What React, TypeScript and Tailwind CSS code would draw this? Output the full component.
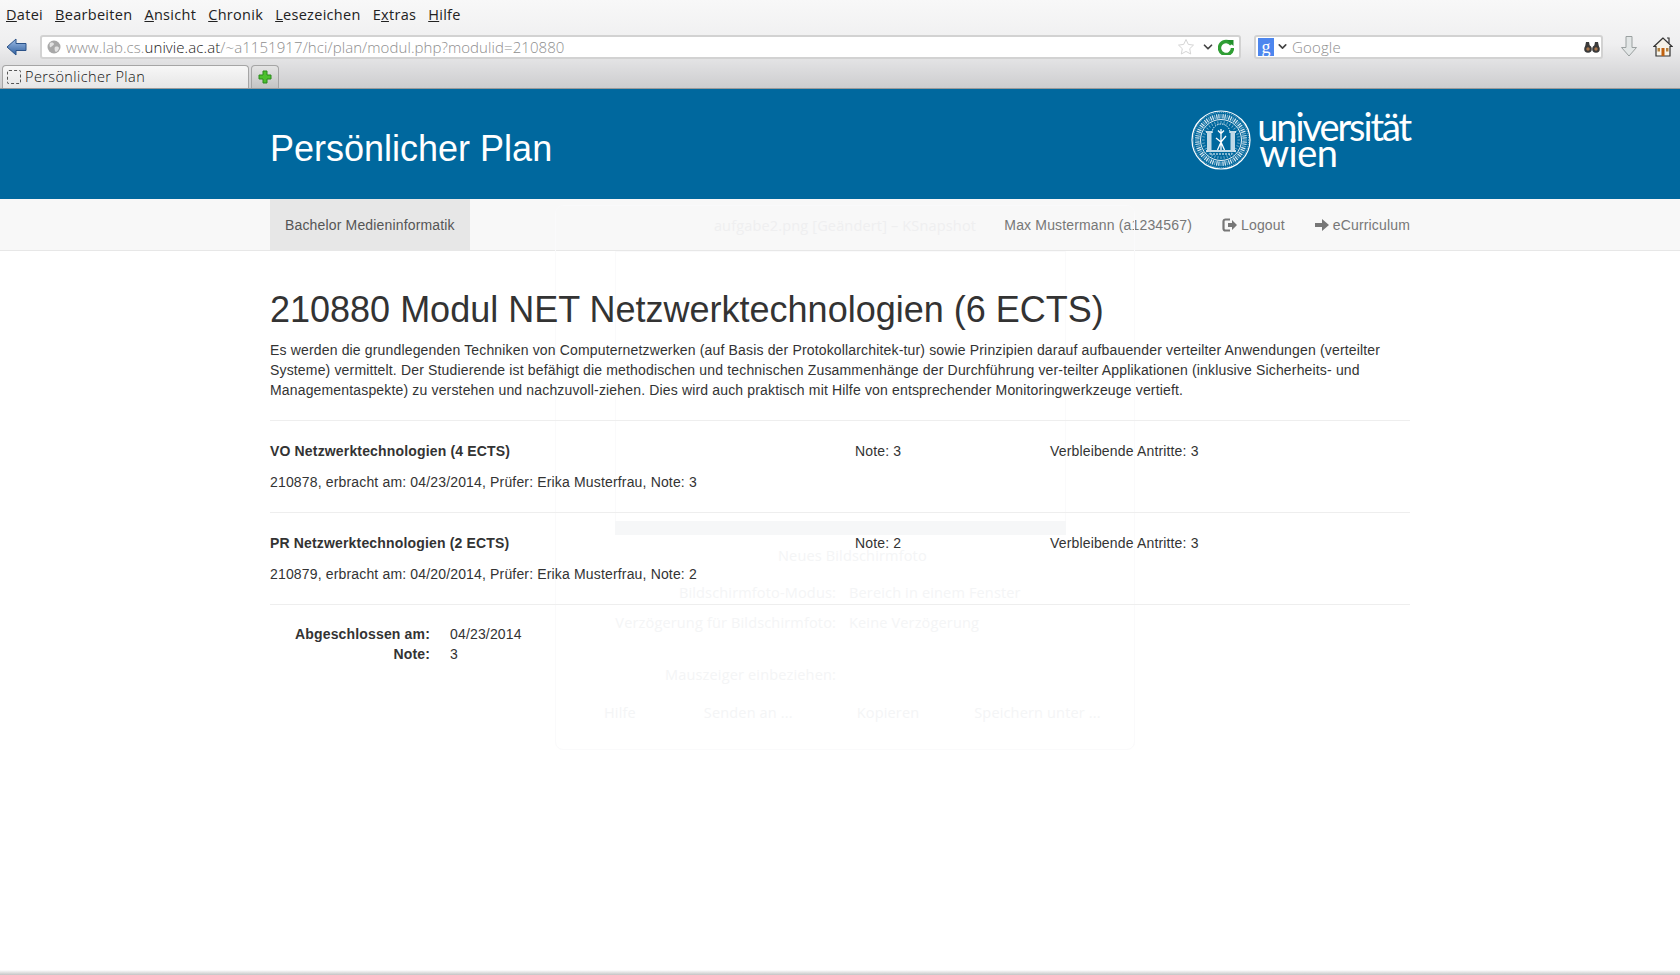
import { ChevronDown } from "lucide-react"

const menus = [
  ["D", "atei"],
  ["B", "earbeiten"],
  ["A", "nsicht"],
  ["C", "hronik"],
  ["L", "esezeichen"],
  ["E", "", "x", "tras"],
  ["H", "ilfe"],
]

function Seal() {
  const ticks = Array.from({ length: 72 }, (_, i) => i * 5)
  const inner = Array.from({ length: 36 }, (_, i) => i * 10)
  return (
    <svg width="60" height="60" viewBox="0 0 60 60" className="shrink-0">
      <circle cx="30" cy="30" r="29" fill="none" stroke="#fff" strokeWidth="1.2" />
      <circle cx="30" cy="30" r="27.600" fill="none" stroke="#fff" strokeWidth="0.5" strokeDasharray="1 1" />
      <circle cx="30" cy="30" r="20.500" fill="none" stroke="#fff" strokeWidth="0.9" />
      {ticks.map((a) => (
        <rect key={a} x="29.400" y="4" width="1.200" height="4.500" fill="#fff" opacity={a % 15 === 0 ? 0.45 : 0.85} transform={`rotate(${a} 30 30)`} />
      ))}
      {inner.map((a) => (
        <rect key={a} x="29.600" y="11" width="0.800" height="2.600" fill="#fff" opacity="0.55" transform={`rotate(${a} 30 30)`} />
      ))}
      <rect x="16" y="23" width="4.500" height="17" fill="#fff" opacity="0.75" />
      <rect x="39.500" y="23" width="4.500" height="17" fill="#fff" opacity="0.75" />
      <path d="M15 22h6.500M38.500 22h6.500M15 41h30" stroke="#fff" strokeWidth="1.300" />
      <path d="M21 23a9 9 0 0 1 18 0" fill="none" stroke="#fff" strokeWidth="1" strokeDasharray="1.500 1" />
      <path d="M30 19v21M25 28l5 4 5-6M26.500 40l3.500-8 3.500 8M27 20.500l3 3 3-3" fill="none" stroke="#fff" strokeWidth="1.300" />
      <path d="M19 44h22" stroke="#fff" strokeWidth="1" strokeDasharray="2 1" />
    </svg>
  )
}

function BrowserChrome() {
  return (
    <div className="h-[89px] bg-gradient-to-b from-[#f8f8f8] via-[#efeff0] to-[#cdcdcf] border-b border-[#9a9a9a] font-['Open_Sans',sans-serif] text-[#222]">
      <div className="flex h-[30px] items-center gap-[12px] pl-[6px] text-[14.5px] tracking-[0.3px]">
        {menus.map((m) => (
          <span key={m[0]}>
            {m[2] ? (
              <>
                {m[0]}
                <u>{m[2]}</u>
                {m[3]}
              </>
            ) : (
              <>
                <u>{m[0]}</u>
                {m[1]}
              </>
            )}
          </span>
        ))}
      </div>
      <div className="flex h-[30px] items-center pt-[3px]">
        <svg width="22" height="20" viewBox="0 0 22 20" className="ml-[6px] mr-[12px]">
          <defs>
            <linearGradient id="back" x1="0" y1="0" x2="0" y2="1">
              <stop offset="0" stopColor="#9dbce6" />
              <stop offset="1" stopColor="#2f5f9e" />
            </linearGradient>
          </defs>
          <path d="M1 10 10 2v4.500h10v7H10V18z" fill="url(#back)" stroke="#2b5288" strokeWidth="1" />
        </svg>
        <div className="flex h-[24px] w-[1201px] items-center rounded-[3px] border-2 border-[#d2d2d2] bg-white pl-[5px] text-[15px] font-light tracking-[0.08px] text-[#8e8e8e]">
          <svg width="14" height="14" viewBox="0 0 14 14" className="mr-[5px] shrink-0">
            <circle cx="7" cy="7" r="6.500" fill="#a8a8a8" />
            <path d="M3 3c2-1 4 0 4 1S5 6 4 7 2 6 3 3zM8 7c2-1 4 0 4 1s-2 4-3 4-2-4-1-5z" fill="#e2e2e2" />
          </svg>
          <span>
            www.lab.cs.<span className="text-[#222]">univie.ac.at</span>/~a1151917/hci/plan/modul.php?modulid=210880
          </span>
          <div className="ml-auto flex items-center">
            <svg width="18" height="18" viewBox="0 0 18 18" className="mr-[4px]">
              <path d="m9 1.500 2.300 4.900 5.200.7-3.800 3.600 1 5.300L9 13.400 4.300 16l1-5.300L1.500 7.100l5.200-.7z" fill="#fff" stroke="#d5d5d5" strokeWidth="1" />
            </svg>
            <ChevronDown size={14} strokeWidth={3} className="ml-[2px] text-[#444]" />
            <svg width="16" height="16" viewBox="0 0 16 16" className="ml-[3px] mr-[5px]">
              <path d="M13.500 5.500A6.500 6.500 0 1 0 14.500 9" fill="none" stroke="#2f9e34" strokeWidth="3.400" />
              <path d="M9 1h6.500v6z" fill="#1f8f2a" />
            </svg>
          </div>
        </div>
        <div className="ml-[13px] flex h-[24px] w-[349px] items-center rounded-[3px] border-2 border-[#d2d2d2] bg-white pl-[2px] text-[15px] font-light text-[#8e8e8e]">
          <span className="flex h-[18px] w-[16px] items-center justify-center bg-[#4d86ee] font-['Liberation_Serif',serif] text-[18px] leading-none text-white">
            g
          </span>
          <ChevronDown size={13} strokeWidth={3} className="ml-[2px] mr-[3px] text-[#444]" />
          <span>Google</span>
          <svg width="16" height="12" viewBox="0 0 16 12" className="ml-auto mr-[1px]">
            <circle cx="4" cy="8" r="3.800" fill="#3a3a3a" />
            <circle cx="12" cy="8" r="3.800" fill="#3a3a3a" />
            <path d="M2 1h3l1 5H1zM11 1h3l1 5h-5z" fill="#3a3a3a" />
            <circle cx="4" cy="8" r="1.700" fill="#a7744a" />
            <circle cx="12" cy="8" r="1.700" fill="#a7744a" />
          </svg>
        </div>
        <svg width="18" height="24" viewBox="0 0 18 24" className="ml-[17px]">
          <path d="M6 1.500h6v11h4.500L9 21 1.500 12.500H6z" fill="#e2e6e6" stroke="#9aa0a0" strokeWidth="1" />
        </svg>
        <svg width="20" height="21" viewBox="0 0 20 21" className="ml-[15px]">
          <path d="M14 2h2v5" fill="none" stroke="#333" strokeWidth="1.200" />
          <path d="M10 2 1 10.500h2V20h14v-9.500h2z" fill="#f7f3e8" stroke="#333" strokeWidth="1.200" />
          <rect x="8.500" y="12" width="3" height="8" fill="#c0610f" />
          <rect x="4.500" y="12" width="2.500" height="3.500" fill="#b5813c" />
          <rect x="13" y="12" width="2.500" height="3.500" fill="#b5813c" />
        </svg>
      </div>
      <div className="flex h-[28px] items-end pl-[2px]">
        <div className="flex h-[23px] w-[247px] items-center rounded-t-[4px] border border-b-0 border-[#a5a5a5] bg-gradient-to-b from-[#f7f7f7] to-[#e6e6e6] pl-[4px] text-[14.5px] font-light tracking-[0.4px] text-[#111]">
          <span className="mr-[4px] h-[14px] w-[14px] rounded-[2px] border border-dashed border-[#555]" />
          Persönlicher Plan
        </div>
        <div className="ml-[2px] flex h-[23px] w-[28px] items-center justify-center rounded-t-[4px] border border-b-0 border-[#a5a5a5] bg-gradient-to-b from-[#e4e4e4] to-[#c4c4c4]">
          <svg width="14" height="14" viewBox="0 0 14 14">
            <path d="M5 1h4v4h4v4H9v4H5V9H1V5h4z" fill="#4cc02e" stroke="#2b8a1c" strokeWidth="1" />
          </svg>
        </div>
      </div>
    </div>
  )
}

// faint after-image of another window that shows through the page
function Ghost() {
  return (
    <div className="pointer-events-none absolute left-[555px] top-[205px] h-[545px] w-[580px] rounded-[8px] border border-[#fafafb] font-['Open_Sans',sans-serif] text-[14.5px] leading-[20px] text-[#f4f5f6]">
      <p className="mt-[10px] text-center text-[#efeff0]">aufgabe2.png [Geändert] – KSnapshot</p>
      <div className="absolute left-[59px] top-[45px] h-[284px] w-[451px] border border-[#fafafb]" />
      <div className="absolute left-[59px] top-[315px] h-[14px] w-[451px] bg-[#f6f7f8]" />
      <p className="absolute left-[222px] top-[340px]">Neues Bildschirmfoto</p>
      <p className="absolute right-[298px] top-[377px]">Bildschirmfoto-Modus:</p>
      <p className="absolute left-[293px] top-[377px]">Bereich in einem Fenster</p>
      <p className="absolute right-[298px] top-[407px]">Verzögerung für Bildschirmfoto:</p>
      <p className="absolute left-[293px] top-[407px]">Keine Verzögerung</p>
      <p className="absolute right-[298px] top-[459px]">Mauszeiger einbeziehen:</p>
      <div className="absolute left-[48px] top-[497px] flex">
        <span>Hilfe</span>
        <span className="ml-[68px]">Senden an ...</span>
        <span className="ml-[64px]">Kopieren</span>
        <span className="ml-[55px]">Speichern unter ...</span>
      </div>
    </div>
  )
}

function Course({ title, note, detail }: { title: string; note: string; detail: string }) {
  return (
    <div className="border-t border-[#eeeeee] pb-[20px] pt-[20px]">
      <div className="grid grid-cols-[585px_195px_1fr]">
        <b className="font-bold">{title}</b>
        <span>{note}</span>
        <span>Verbleibende Antritte: 3</span>
      </div>
      <p className="mt-[11px]">{detail}</p>
    </div>
  )
}

export default function App() {
  return (
    <div className="relative flex h-[975px] flex-col overflow-hidden bg-white font-['Liberation_Sans',sans-serif] text-[14px] leading-[20px] tracking-[0.16px] text-[#333]">
      <BrowserChrome />
      <header className="h-[110px] bg-[#00689e]">
        <div className="mx-auto flex h-full w-[1140px] justify-between">
          <h1 className="pt-[40px] text-[36px] font-normal leading-[40px] tracking-normal text-white">Persönlicher Plan</h1>
          <div className="flex items-start pt-[21px]">
            <Seal />
            <div className="ml-[6px] pt-[3px] font-['Lato',sans-serif] text-[38px] font-normal leading-[26px] text-white">
              <span className="tracking-[-2.1px]">universität</span>
              <br />
              <span className="ml-[2px] tracking-[-0.5px]">wien</span>
            </div>
          </div>
        </div>
      </header>
      <nav className="h-[52px] border-b border-[#e7e7e7] bg-[#f8f8f8] text-[#777]">
        <div className="mx-auto flex h-full w-[1140px] items-center">
          <span className="flex h-full items-center bg-[#e7e7e7] px-[15px] text-[#555]">Bachelor Medieninformatik</span>
          <span className="ml-auto">Max Mustermann (a1234567)</span>
          <span className="ml-[30px] flex items-center gap-[4px]">
            <svg width="15" height="14" viewBox="0 0 15 14">
              <path d="M8 1.500H3.500a2 2 0 0 0-2 2v7a2 2 0 0 0 2 2H8" fill="none" stroke="#777" strokeWidth="2.200" />
              <path d="M6 5h4V2l5 5-5 5V9H6z" fill="#777" />
            </svg>
            Logout
          </span>
          <span className="ml-[30px] flex items-center gap-[4px]">
            <svg width="14" height="12" viewBox="0 0 14 12">
              <path d="M0 4h7V0l7 6-7 6V8H0z" fill="#777" />
            </svg>
            eCurriculum
          </span>
        </div>
      </nav>
      <main className="relative z-10 mx-auto w-[1140px]">
        <h2 className="mt-[39px] text-[36px] font-normal leading-[40px] tracking-normal">
          210880 Modul NET Netzwerktechnologien (6 ECTS)
        </h2>
        <p className="mt-[10px] mb-[20px]">
          Es werden die grundlegenden Techniken von Computernetzwerken (auf Basis der Protokollarchitek-tur) sowie Prinzipien darauf aufbauender verteilter Anwendungen (verteilter Systeme) vermittelt. Der Studierende ist befähigt die methodischen und technischen Zusammenhänge der Durchführung ver-teilter Applikationen (inklusive Sicherheits- und Managementaspekte) zu verstehen und nachzuvoll-ziehen. Dies wird auch praktisch mit Hilfe von entsprechender Monitoringwerkzeuge vertieft.
        </p>
        <Course
          title="VO Netzwerktechnologien (4 ECTS)"
          note="Note: 3"
          detail="210878, erbracht am: 04/23/2014, Prüfer: Erika Musterfrau, Note: 3"
        />
        <Course
          title="PR Netzwerktechnologien (2 ECTS)"
          note="Note: 2"
          detail="210879, erbracht am: 04/20/2014, Prüfer: Erika Musterfrau, Note: 2"
        />
        <dl className="grid grid-cols-[160px_1fr] gap-x-[20px] border-t border-[#eeeeee] pt-[19px]">
          <dt className="text-right font-bold">Abgeschlossen am:</dt>
          <dd>04/23/2014</dd>
          <dt className="text-right font-bold">Note:</dt>
          <dd>3</dd>
        </dl>
      </main>
      <Ghost />
      <div className="absolute inset-x-0 bottom-0 h-[5px] bg-gradient-to-b from-white to-[#c4c4c4]" />
    </div>
  )
}
